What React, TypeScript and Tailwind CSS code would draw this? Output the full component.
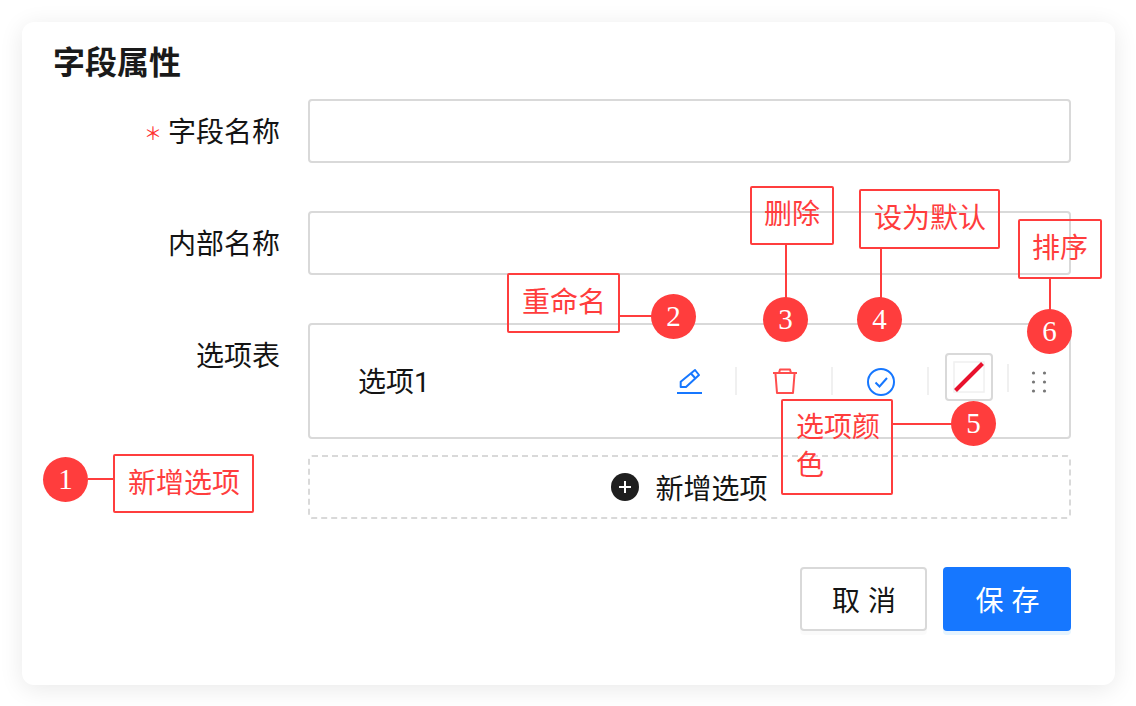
import React from "react";

const CJK = { fontFamily: '"Noto Sans CJK SC", sans-serif' };

function Callout({ className, children }: { className: string; children: React.ReactNode }) {
  return (
    <div className={"absolute z-10 border-2 border-[#ff3d3d] rounded-[2px] text-[#ff3d3d] text-[28px] leading-[38px] font-normal " + className}>
      {children}
    </div>
  );
}

function Badge({ className, children }: { className: string; children: React.ReactNode }) {
  return (
    <div className={"absolute z-20 w-[45px] h-[45px] rounded-full bg-[#ff3d3d] text-white flex items-center justify-center text-[29px] font-['Liberation_Serif',serif] " + className}>
      {children}
    </div>
  );
}

function Line({ className }: { className: string }) {
  return <div className={"absolute z-10 bg-[#ff3d3d] " + className} />;
}

function Divider() {
  return <div className="w-[2px] h-[28px] bg-[#f0f0f0]" />;
}

function Label({ children }: { children: React.ReactNode }) {
  return <div className="w-[227px] h-[64px] pb-[2px] flex items-center justify-end text-[28px] text-[#141414] shrink-0">{children}</div>;
}

export default function App() {
  return (
    <div className="relative w-[1136px] h-[706px] bg-white overflow-hidden" style={CJK}>
      <div className="absolute left-[22px] top-[22px] w-[1093px] h-[663px] bg-white rounded-[12px] shadow-[0_4px_24px_rgba(0,0,0,0.09)] pl-[31px] pr-[44px] pt-[14px]">
        <div className="h-[47px] flex items-center text-[32px] font-bold text-[#1a1a1a]">字段属性</div>
        <div className="mt-[16px] flex flex-col">
          <div className="flex gap-[28px]">
            <Label>
              <span className="text-[#ff2f2f] text-[18px] mr-[6px] mt-[4px]">＊</span>字段名称
            </Label>
            <div className="flex-1 h-[64px] border-2 border-[#d9d9d9] rounded-[4px]" />
          </div>
          <div className="flex gap-[28px] mt-[48px]">
            <Label>内部名称</Label>
            <div className="flex-1 h-[64px] border-2 border-[#d9d9d9] rounded-[4px]" />
          </div>
          <div className="flex gap-[28px] mt-[48px]">
            <Label>选项表</Label>
            <div className="flex-1 h-[116px] border-2 border-[#d9d9d9] rounded-[4px] flex items-center pl-[48px] pr-[21px]">
              <div className="text-[28px] text-[#141414] flex-1">选项<span className="font-['Roboto',sans-serif]">1</span></div>
              <div className="flex items-center">
                <svg width="28" height="28" viewBox="0 0 28 28" fill="none" stroke="#1677ff" strokeWidth="2" className="mr-[32px] mt-[1px]">
                  <path d="M5.7 13.7 L20 2 L24 7 L11 19 H5.7 Z" strokeLinejoin="round" />
                  <path d="M16 5.5 L20.5 10.5" />
                  <path d="M2 25 H27" />
                </svg>
                <Divider />
                <svg width="28" height="28" viewBox="0 0 28 28" fill="none" stroke="#ff4d4d" strokeWidth="2" className="ml-[34px] mr-[32px] mt-[1px]" strokeLinejoin="round">
                  <path d="M2 5 H26" />
                  <path d="M8 5 L9 1.5 H19 L20 5" />
                  <path d="M4.5 6 L6 25 H22 L23.5 6" />
                </svg>
                <Divider />
                <svg width="30" height="30" viewBox="0 0 30 30" fill="none" stroke="#1677ff" strokeWidth="2" className="ml-[33px] mr-[31px] mt-[2px]">
                  <circle cx="15" cy="15" r="13" />
                  <path d="M9.5 15.5 L13.5 19.5 L21 11" />
                </svg>
                <Divider />
                <div className="ml-[16px] mb-[8px] w-[48px] h-[48px] border-2 border-[#d9d9d9] rounded-[4px] flex items-center justify-center">
                  <svg width="32" height="32" viewBox="0 0 32 32">
                    <rect x="1" y="1" width="30" height="30" fill="none" stroke="#f0f0f0" strokeWidth="1.5" />
                    <path d="M2.5 29.5 L29.5 2.5" stroke="#e8112d" strokeWidth="4" />
                  </svg>
                </div>
                <div className="ml-[14px] mr-[21px] mb-[6px]"><Divider /></div>
                <svg width="18" height="24" viewBox="0 0 18 24" fill="#777" className="mt-[2px]">
                  <circle cx="3.5" cy="3" r="1.6" /><circle cx="14.5" cy="3" r="1.6" />
                  <circle cx="3.5" cy="12" r="1.6" /><circle cx="14.5" cy="12" r="1.6" />
                  <circle cx="3.5" cy="21" r="1.6" /><circle cx="14.5" cy="21" r="1.6" />
                </svg>
              </div>
            </div>
          </div>
          <div className="ml-[255px] mt-[16px] h-[64px] border-2 border-dashed border-[#d9d9d9] rounded-[4px] flex items-center justify-center text-[28px] text-[#141414]">
            <span className="w-[28px] h-[28px] rounded-full bg-[#1f1f1f] flex items-center justify-center mr-[16px]">
              <svg width="14" height="14" viewBox="0 0 14 14" stroke="#fff" strokeWidth="2"><path d="M7 1 V13 M1 7 H13" /></svg>
            </span>
            新增选项
          </div>
          <div className="mt-[48px] flex justify-end gap-[16px]">
            <div className="w-[127px] h-[64px] pl-[9px] border-2 border-[#d9d9d9] rounded-[4px] flex items-center justify-center text-[28px] text-[#141414] tracking-[8px] shadow-[0_4px_0_rgba(0,0,0,0.02)]">取消</div>
            <div className="w-[128px] h-[64px] pl-[9px] bg-[#1677ff] rounded-[4px] flex items-center justify-center text-[28px] text-white tracking-[8px] shadow-[0_4px_0_rgba(5,145,255,0.1)]">保存</div>
          </div>
        </div>
      </div>

      <Callout className="left-[113px] top-[454px] w-[141px] h-[59px] pl-[13px] pt-[6px]">新增选项</Callout>
      <Line className="left-[88px] top-[478px] w-[26px] h-[2px]" />
      <Badge className="left-[43px] top-[457px]">1</Badge>

      <Callout className="left-[507px] top-[273px] w-[113px] h-[60px] pl-[13px] pt-[6px]">重命名</Callout>
      <Line className="left-[619px] top-[315px] w-[34px] h-[2px]" />
      <Badge className="left-[651px] top-[294px]">2</Badge>

      <Callout className="left-[750px] top-[186px] w-[84px] h-[59px] pl-[12px] pt-[5px]">删除</Callout>
      <Line className="left-[785px] top-[244px] w-[2px] h-[56px]" />
      <Badge className="left-[763px] top-[297px]">3</Badge>

      <Callout className="left-[859px] top-[189px] w-[141px] h-[60px] pl-[13px] pt-[6px]">设为默认</Callout>
      <Line className="left-[880px] top-[248px] w-[2px] h-[52px]" />
      <Badge className="left-[857px] top-[297px]">4</Badge>

      <Callout className="left-[781px] top-[399px] w-[112px] h-[96px] pl-[13px] pt-[5px]">选项颜色</Callout>
      <Line className="left-[892px] top-[423px] w-[60px] h-[2px]" />
      <Badge className="left-[951px] top-[401px]">5</Badge>

      <Callout className="left-[1018px] top-[219px] w-[84px] h-[60px] pl-[12px] pt-[6px]">排序</Callout>
      <Line className="left-[1049px] top-[278px] w-[2px] h-[34px]" />
      <Badge className="left-[1027px] top-[309px]">6</Badge>
    </div>
  );
}
